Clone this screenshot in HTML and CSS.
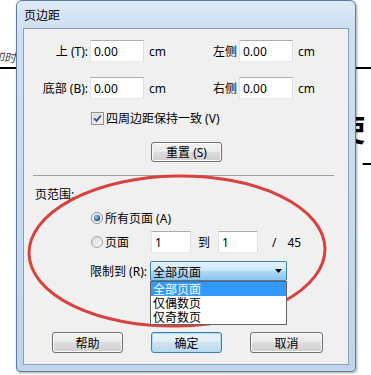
FILE: index.html
```html
<!DOCTYPE html>
<html lang="zh-CN">
<head>
  <meta charset="UTF-8">
  <title>页边距</title>
  <link rel="stylesheet" href="styles.css">
</head>
<body>
  <div class="doc">
    <div class="doc-note"><span>打印时</span></div>
    <div class="doc-rule"></div>
    <div class="doc-title">使</div>
    <div class="doc-dash">一</div>
  </div>

  <div class="dialog">
    <div class="titlebar">页边距</div>
    <div class="client">
      <div class="margins">
        <span class="lbl">上 (T):</span>
        <input class="field" value="0.00">
        <span class="unit">cm</span>
        <span class="lbl">左侧</span>
        <input class="field" value="0.00">
        <span class="unit">cm</span>

        <span class="lbl">底部 (B):</span>
        <input class="field" value="0.00">
        <span class="unit">cm</span>
        <span class="lbl">右侧</span>
        <input class="field" value="0.00">
        <span class="unit">cm</span>
      </div>

      <div class="check-row">
        <svg class="checkbox" width="13" height="13" viewBox="0 0 13 13">
          <defs>
            <linearGradient id="cb" x1="0" y1="0" x2="1" y2="1">
              <stop offset="0" stop-color="#dcdcdc"/>
              <stop offset="1" stop-color="#fbfbfb"/>
            </linearGradient>
          </defs>
          <rect x="0.5" y="0.5" width="12" height="12" fill="#fff" stroke="#8f8f8f"/>
          <rect x="2" y="2" width="9" height="9" fill="url(#cb)" stroke="#c9c9c9" stroke-width="0.6"/>
          <path d="M3.2 6.4 L5.6 8.9 L9.8 3.6" fill="none" stroke="#36508a" stroke-width="1.8"/>
        </svg>
        <span>四周边距保持一致 (V)</span>
      </div>

      <div class="reset-row">
        <button class="btn">重置 (S)</button>
      </div>

      <hr class="sep">

      <div class="range-title">页范围:</div>

      <div class="radio-row">
        <span class="opt">
          <svg width="12" height="12" viewBox="0 0 12 12">
            <defs>
              <radialGradient id="dot" cx="0.35" cy="0.35" r="0.7">
                <stop offset="0" stop-color="#9ccaf0"/>
                <stop offset="1" stop-color="#174f8c"/>
              </radialGradient>
            </defs>
            <circle cx="6" cy="6" r="5.5" fill="#f4f4f4" stroke="#8f8f8f"/>
            <circle cx="6" cy="6" r="3.2" fill="url(#dot)"/>
          </svg>
          所有页面 (A)
        </span>
      </div>

      <div class="radio-row pages">
        <span class="opt">
          <svg width="12" height="12" viewBox="0 0 12 12">
            <defs>
              <linearGradient id="off" x1="0" y1="0" x2="1" y2="1">
                <stop offset="0" stop-color="#d8d8d8"/>
                <stop offset="1" stop-color="#fbfbfb"/>
              </linearGradient>
            </defs>
            <circle cx="6" cy="6" r="5.5" fill="url(#off)" stroke="#a3a3a3"/>
          </svg>
          页面
        </span>
        <input class="field small" value="1">
        <span class="to">到</span>
        <input class="field small" value="1">
        <span class="slash">/</span>
        <span class="total">45</span>
      </div>

      <div class="restrict-row">
        <span class="lbl restrict-lbl">限制到 (R):</span>
        <div class="combo">
          <span>全部页面</span>
          <svg class="combo-arrow" width="7" height="4" viewBox="0 0 7 4">
            <path d="M0 0 H7 L3.5 4 Z" fill="#000"/>
          </svg>
          <ul class="combo-list">
            <li class="selected">全部页面</li>
            <li>仅偶数页</li>
            <li>仅奇数页</li>
          </ul>
        </div>
      </div>

      <div class="actions">
        <button class="btn">帮助</button>
        <button class="btn btn-default">确定</button>
        <button class="btn btn-wide">取消</button>
      </div>
    </div>
  </div>

  <svg class="mark" width="371" height="375" viewBox="0 0 371 375">
    <ellipse cx="177" cy="251" rx="148" ry="75" fill="none" stroke="#d9413d" stroke-width="3" transform="rotate(-1 177 251)"/>
  </svg>
</body>
</html>
```

FILE: styles.css
```css
/* Ventana de diálogo estilo Windows 7 */
body {
  margin: 0;
  width: 371px;
  height: 375px;
  overflow: hidden;
  position: relative;
  background: #fff;
  color: #000;
  font-family: "Noto Sans", "Noto Sans CJK SC", sans-serif;
  font-size: 12px;
}

/* documento de fondo */
.doc {
  padding-top: 50px;
}

.doc-note {
  width: 16px;
  display: flex;
  justify-content: flex-end;
  font-style: italic;
  color: #444;
  line-height: 16px;
  white-space: nowrap;
}

.doc-rule {
  margin-top: 1px;
  border-top: 2px solid #000;
}

.doc-title {
  margin: 40px 0 0 333px;
  font-family: "Noto Sans CJK SC", sans-serif;
  font-size: 32px;
  font-weight: bold;
  line-height: 36px;
}

.doc-dash {
  margin: 10px 0 0 362px;
  font-family: "Noto Sans CJK SC", sans-serif;
  font-size: 16px;
  font-weight: bold;
  line-height: 16px;
}

/* marco */
.dialog {
  position: absolute;
  left: 16px;
  top: 0;
  width: 326px;
  padding: 0 6px 6px;
  border: 1px solid #5f7a99;
  border-radius: 6px 6px 4px 4px;
  background: linear-gradient(#dce9f7 0, #cfe0f3 28px, #bfd5ee 100%);
  box-shadow: 1px 1px 3px rgba(0, 0, 0, 0.35);
}

.titlebar {
  height: 27px;
  line-height: 27px;
  padding-left: 1px;
  font-family: "Noto Sans CJK SC", sans-serif;
}

.client {
  height: 337px;
  box-sizing: border-box;
  border: 1px solid #8e9fb3;
  background: #f0f0f0;
}

/* márgenes */
.margins {
  display: grid;
  grid-template-columns: 64px 54px 58px 31px 54px auto;
  grid-auto-rows: 22px;
  column-gap: 2px;
  row-gap: 15px;
  align-items: center;
  margin-top: 11px;
}

.lbl {
  text-align: right;
  white-space: nowrap;
}

.unit {
  padding-left: 3px;
}

.field {
  width: 54px;
  height: 22px;
  box-sizing: border-box;
  margin: 0;
  padding: 0 3px;
  border: 1px solid #abadb3;
  border-color: #abadb3 #dbdfe6 #e3e9ef #e2e3ea;
  background: #fff;
  font-family: "Noto Sans", sans-serif;
  font-size: 12px;
  color: #000;
}

.field.small {
  width: 40px;
}

.check-row {
  display: flex;
  align-items: center;
  gap: 2px;
  height: 14px;
  margin-top: 12px;
  padding-left: 67px;
}

.reset-row {
  display: flex;
  margin-top: 17px;
  padding-left: 127px;
}

/* botones */
.btn {
  width: 71px;
  height: 20px;
  box-sizing: border-box;
  padding: 0;
  border: 1px solid #707070;
  border-radius: 3px;
  background: linear-gradient(#f2f2f2 0%, #ebebeb 50%, #dddddd 50%, #cfcfcf 100%);
  box-shadow: inset 0 0 0 1px #fbfbfb;
  font-family: "Noto Sans", "Noto Sans CJK SC", sans-serif;
  font-size: 12px;
  color: #000;
}

.btn-default {
  border-color: #3c7fb1;
  background: linear-gradient(#eaf3fa 0%, #e0edf7 50%, #cfe2f1 50%, #c0d9ee 100%);
  box-shadow: inset 0 0 0 1px #a9dcf8;
}

.btn-wide {
  width: 73px;
}

.sep {
  height: 0;
  margin: 13px 14px 0 9px;
  border: 0;
  border-top: 1px solid #a0a0a0;
}

.range-title {
  margin-top: 11px;
  padding-left: 11px;
  line-height: 16px;
}

/* rango de páginas */
.radio-row {
  display: flex;
  align-items: center;
  height: 22px;
  margin-top: 4px;
  padding-left: 67px;
}

.radio-row + .radio-row {
  margin-top: 2px;
}

.opt {
  display: flex;
  align-items: center;
  gap: 2px;
}

.pages .opt {
  width: 60px;
}

.to {
  margin: 0 8px 0 7px;
}

.slash {
  margin-left: 14px;
}

.total {
  margin-left: 11px;
}

.restrict-row {
  display: flex;
  align-items: center;
  height: 20px;
  margin-top: 8px;
  padding-left: 63px;
}

.restrict-lbl {
  width: 60px;
  margin-right: 3px;
}

.combo {
  position: relative;
  display: flex;
  align-items: center;
  width: 137px;
  height: 20px;
  box-sizing: border-box;
  padding-left: 2px;
  border: 1px solid #3c7fb1;
  border-radius: 2px;
  background: linear-gradient(#e4f2fc 0%, #cde8fa 45%, #a9d6f5 55%, #8cc4ec 100%);
  font-family: "Noto Sans CJK SC", sans-serif;
}

.combo-arrow {
  margin-left: auto;
  margin-right: 4px;
}

.combo-list {
  position: absolute;
  left: -1px;
  top: 19px;
  z-index: 2;
  width: 137px;
  box-sizing: border-box;
  margin: 0;
  padding: 0;
  list-style: none;
  border: 1px solid #646464;
  background: #fff;
}

.combo-list li {
  height: 14px;
  line-height: 14px;
  padding-left: 2px;
  font-size: 12px;
}

.combo-list li.selected {
  background: #3399ff;
  color: #fff;
}

.actions {
  display: flex;
  gap: 28px;
  margin-top: 51px;
  padding-left: 28px;
}

.actions .btn {
  height: 21px;
}

/* anotación roja */
.mark {
  position: absolute;
  left: 0;
  top: 0;
  z-index: 1;
  pointer-events: none;
}
```
